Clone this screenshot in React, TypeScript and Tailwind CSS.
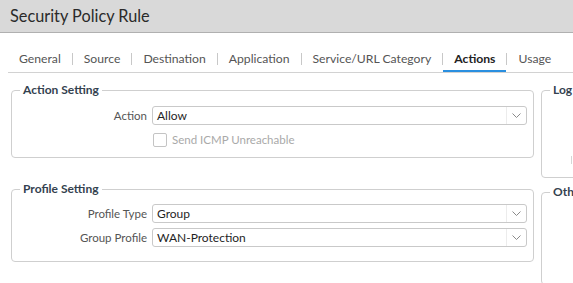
import React from "react";

const tabs = [
  "General",
  "Source",
  "Destination",
  "Application",
  "Service/URL Category",
  "Actions",
  "Usage",
];

function Chevron() {
  return (
    <svg width="9" height="5" viewBox="0 0 9 5" fill="none">
      <path d="M0.5 0.5L4.5 4.5L8.5 0.5" stroke="#8a8a8a" strokeWidth="1" />
    </svg>
  );
}

function Select({ value }: { value: string }) {
  return (
    <div className="flex h-[19px] flex-1 items-center rounded-[3px] border border-[#c9c9c9] bg-white">
      <span className="flex-1 pl-[4px] text-[12px] text-[#1f1f1f]">{value}</span>
      <span className="flex h-full w-[20px] items-center justify-center border-l border-[#ececec]">
        <Chevron />
      </span>
    </div>
  );
}

function Row({ label, children }: { label: string; children: React.ReactNode }) {
  return (
    <div className="flex items-center">
      <span className="w-[132px] pr-[5px] text-right text-[11.5px] text-[#555]">{label}</span>
      {children}
    </div>
  );
}

function Box({
  title,
  className,
  children,
}: {
  title: string;
  className?: string;
  children?: React.ReactNode;
}) {
  return (
    <fieldset
      className={`rounded-[4px] border border-[#cfcfcf] pl-[8px] pr-[6px] ${className ?? ""}`}
    >
      <legend className="whitespace-nowrap px-[3px] text-[12px] font-bold leading-[14px] text-[#34424f]">
        {title}
      </legend>
      {children}
    </fieldset>
  );
}

export default function App() {
  return (
    <div
      className="h-[283px] w-[573px] overflow-hidden bg-white"
      style={{ fontFamily: "Lato, 'Liberation Sans', sans-serif" }}
    >
      <div className="flex h-[33px] items-center border-b border-[#b0b0b0] bg-[#d9d9d9] pl-[10px]">
        <h1 className="text-[16.3px] text-[#2a2a2a]">Security Policy Rule</h1>
      </div>

      <div className="ml-[8px] mt-[15px] flex h-[25px] items-start whitespace-nowrap border-b border-[#d2d2d2]">
        {tabs.map((t, i) => (
          <React.Fragment key={t}>
            {i > 0 && <span className="mt-[5px] h-[12px] w-px shrink-0 bg-[#c8c8c8]" />}
            <span
              className={`h-[24px] shrink-0 px-[11px] text-[12.2px] leading-[21px] ${
                t === "Actions"
                  ? "border-b-2 border-[#2a8fe0] font-bold text-[#222]"
                  : "text-[#555]"
              }`}
            >
              {t}
            </span>
          </React.Fragment>
        ))}
      </div>

      <div className="mt-[10px] flex gap-[7px] pl-[11px]">
        <div className="flex w-[523px] shrink-0 flex-col gap-[24px]">
          <Box title="Action Setting" className="h-[75px]">
            <div className="mt-[9px] flex flex-col">
              <Row label="Action">
                <Select value="Allow" />
              </Row>
              <div className="mt-[6px] flex items-center pl-[133px]">
                <span className="h-[14px] w-[14px] rounded-[2px] border border-[#c4c4c4] bg-white" />
                <span className="ml-[5px] text-[11.5px] text-[#a9a9a9]">Send ICMP Unreachable</span>
              </div>
            </div>
          </Box>
          <Box title="Profile Setting" className="h-[80px]">
            <div className="mt-[8px] flex flex-col gap-[5px]">
              <Row label="Profile Type">
                <Select value="Group" />
              </Row>
              <Row label="Group Profile">
                <Select value="WAN-Protection" />
              </Row>
            </div>
          </Box>
        </div>

        <div className="flex w-[200px] shrink-0 flex-col gap-[7px]">
          <Box title="Log Settings" className="h-[95px]">
            <div className="mt-[59px] pl-[21px]">
              <span className="block h-[8px] w-[10px] border-l border-[#d6d6d6]" />
            </div>
          </Box>
          <Box title="Other Settings" className="h-[100px]" />
        </div>
      </div>
    </div>
  );
}
